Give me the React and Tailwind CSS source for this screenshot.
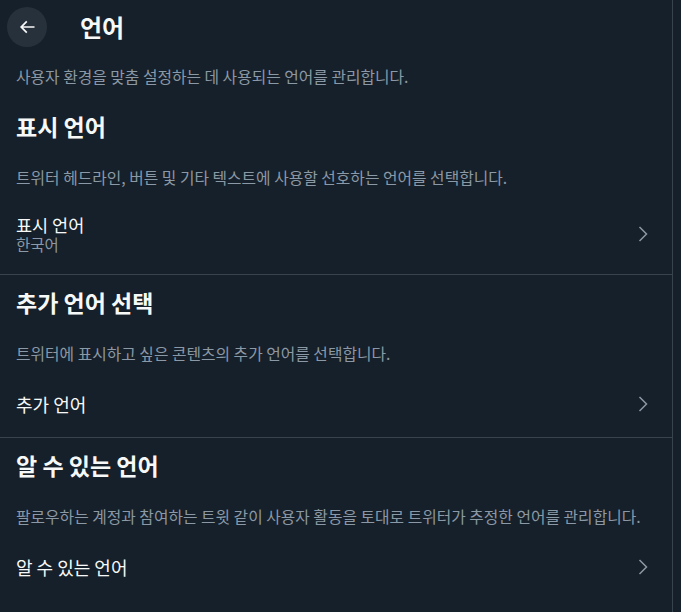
const font = { fontFamily: '"Noto Sans CJK KR", "Noto Sans", sans-serif' }

function Chevron() {
  return (
    <svg width="10" height="16" viewBox="0 0 10 16" fill="none" className="shrink-0">
      <path d="M1.5 1 L8.5 8 L1.5 15" stroke="#8b98a5" strokeWidth="1.5" />
    </svg>
  )
}

function Section({ title, desc, item, sub, last }) {
  return (
    <div className={last ? '' : 'border-b border-[#38444d]'}>
      <h2 className="px-4 pt-[13px] pb-[14px] text-[23px] font-bold leading-[28px] text-[#f7f9f9]">{title}</h2>
      <p className="px-4 pt-[14px] pb-[12px] text-[15.8px] leading-[20px] text-[#8b98a5]">{desc}</p>
      {sub ? (
        <div className="flex items-center justify-between px-4 pt-[15px] pb-[21px] pr-[24px]">
          <div className="flex flex-col gap-[1px]">
            <div className="text-[17.5px] leading-[19px] text-[#f7f9f9]">{item}</div>
            <div className="text-[15.5px] leading-[18px] text-[#8b98a5]">{sub}</div>
          </div>
          <Chevron />
        </div>
      ) : (
        <div className="flex items-center justify-between px-4 pt-[18px] pb-[23px] pr-[24px]">
          <div className="text-[18px] leading-[20px] text-[#f7f9f9]">{item}</div>
          <Chevron />
        </div>
      )}
    </div>
  )
}

export default function App() {
  return (
    <div className="min-h-[612px] w-[681px] bg-[#16202a]" style={font}>
      <div className="min-h-[612px] w-[673px] border-r border-[#38444d]">
        <div className="flex h-[53px] items-center pl-[7px]">
          <button className="flex h-10 w-10 items-center justify-center rounded-full bg-[#27313c]">
            <svg width="20" height="20" viewBox="0 0 24 24" fill="#f7f9f9">
              <path d="M7.414 13l5.043 5.04-1.414 1.42L3.586 12l7.457-7.46 1.414 1.42L7.414 11H21v2H7.414z" />
            </svg>
          </button>
          <h1 className="ml-[33px] text-[24px] font-bold leading-[28px] text-[#f7f9f9]">언어</h1>
        </div>
        <p className="px-4 pt-[14px] pb-[12px] text-[15.8px] leading-[20px] text-[#8b98a5]">
          사용자 환경을 맞춤 설정하는 데 사용되는 언어를 관리합니다.
        </p>
        <Section
          title="표시 언어"
          desc="트위터 헤드라인, 버튼 및 기타 텍스트에 사용할 선호하는 언어를 선택합니다."
          item="표시 언어"
          sub="한국어"
        />
        <Section
          title="추가 언어 선택"
          desc="트위터에 표시하고 싶은 콘텐츠의 추가 언어를 선택합니다."
          item="추가 언어"
        />
        <Section
          title="알 수 있는 언어"
          desc="팔로우하는 계정과 참여하는 트윗 같이 사용자 활동을 토대로 트위터가 추정한 언어를 관리합니다."
          item="알 수 있는 언어"
          last
        />
      </div>
    </div>
  )
}
